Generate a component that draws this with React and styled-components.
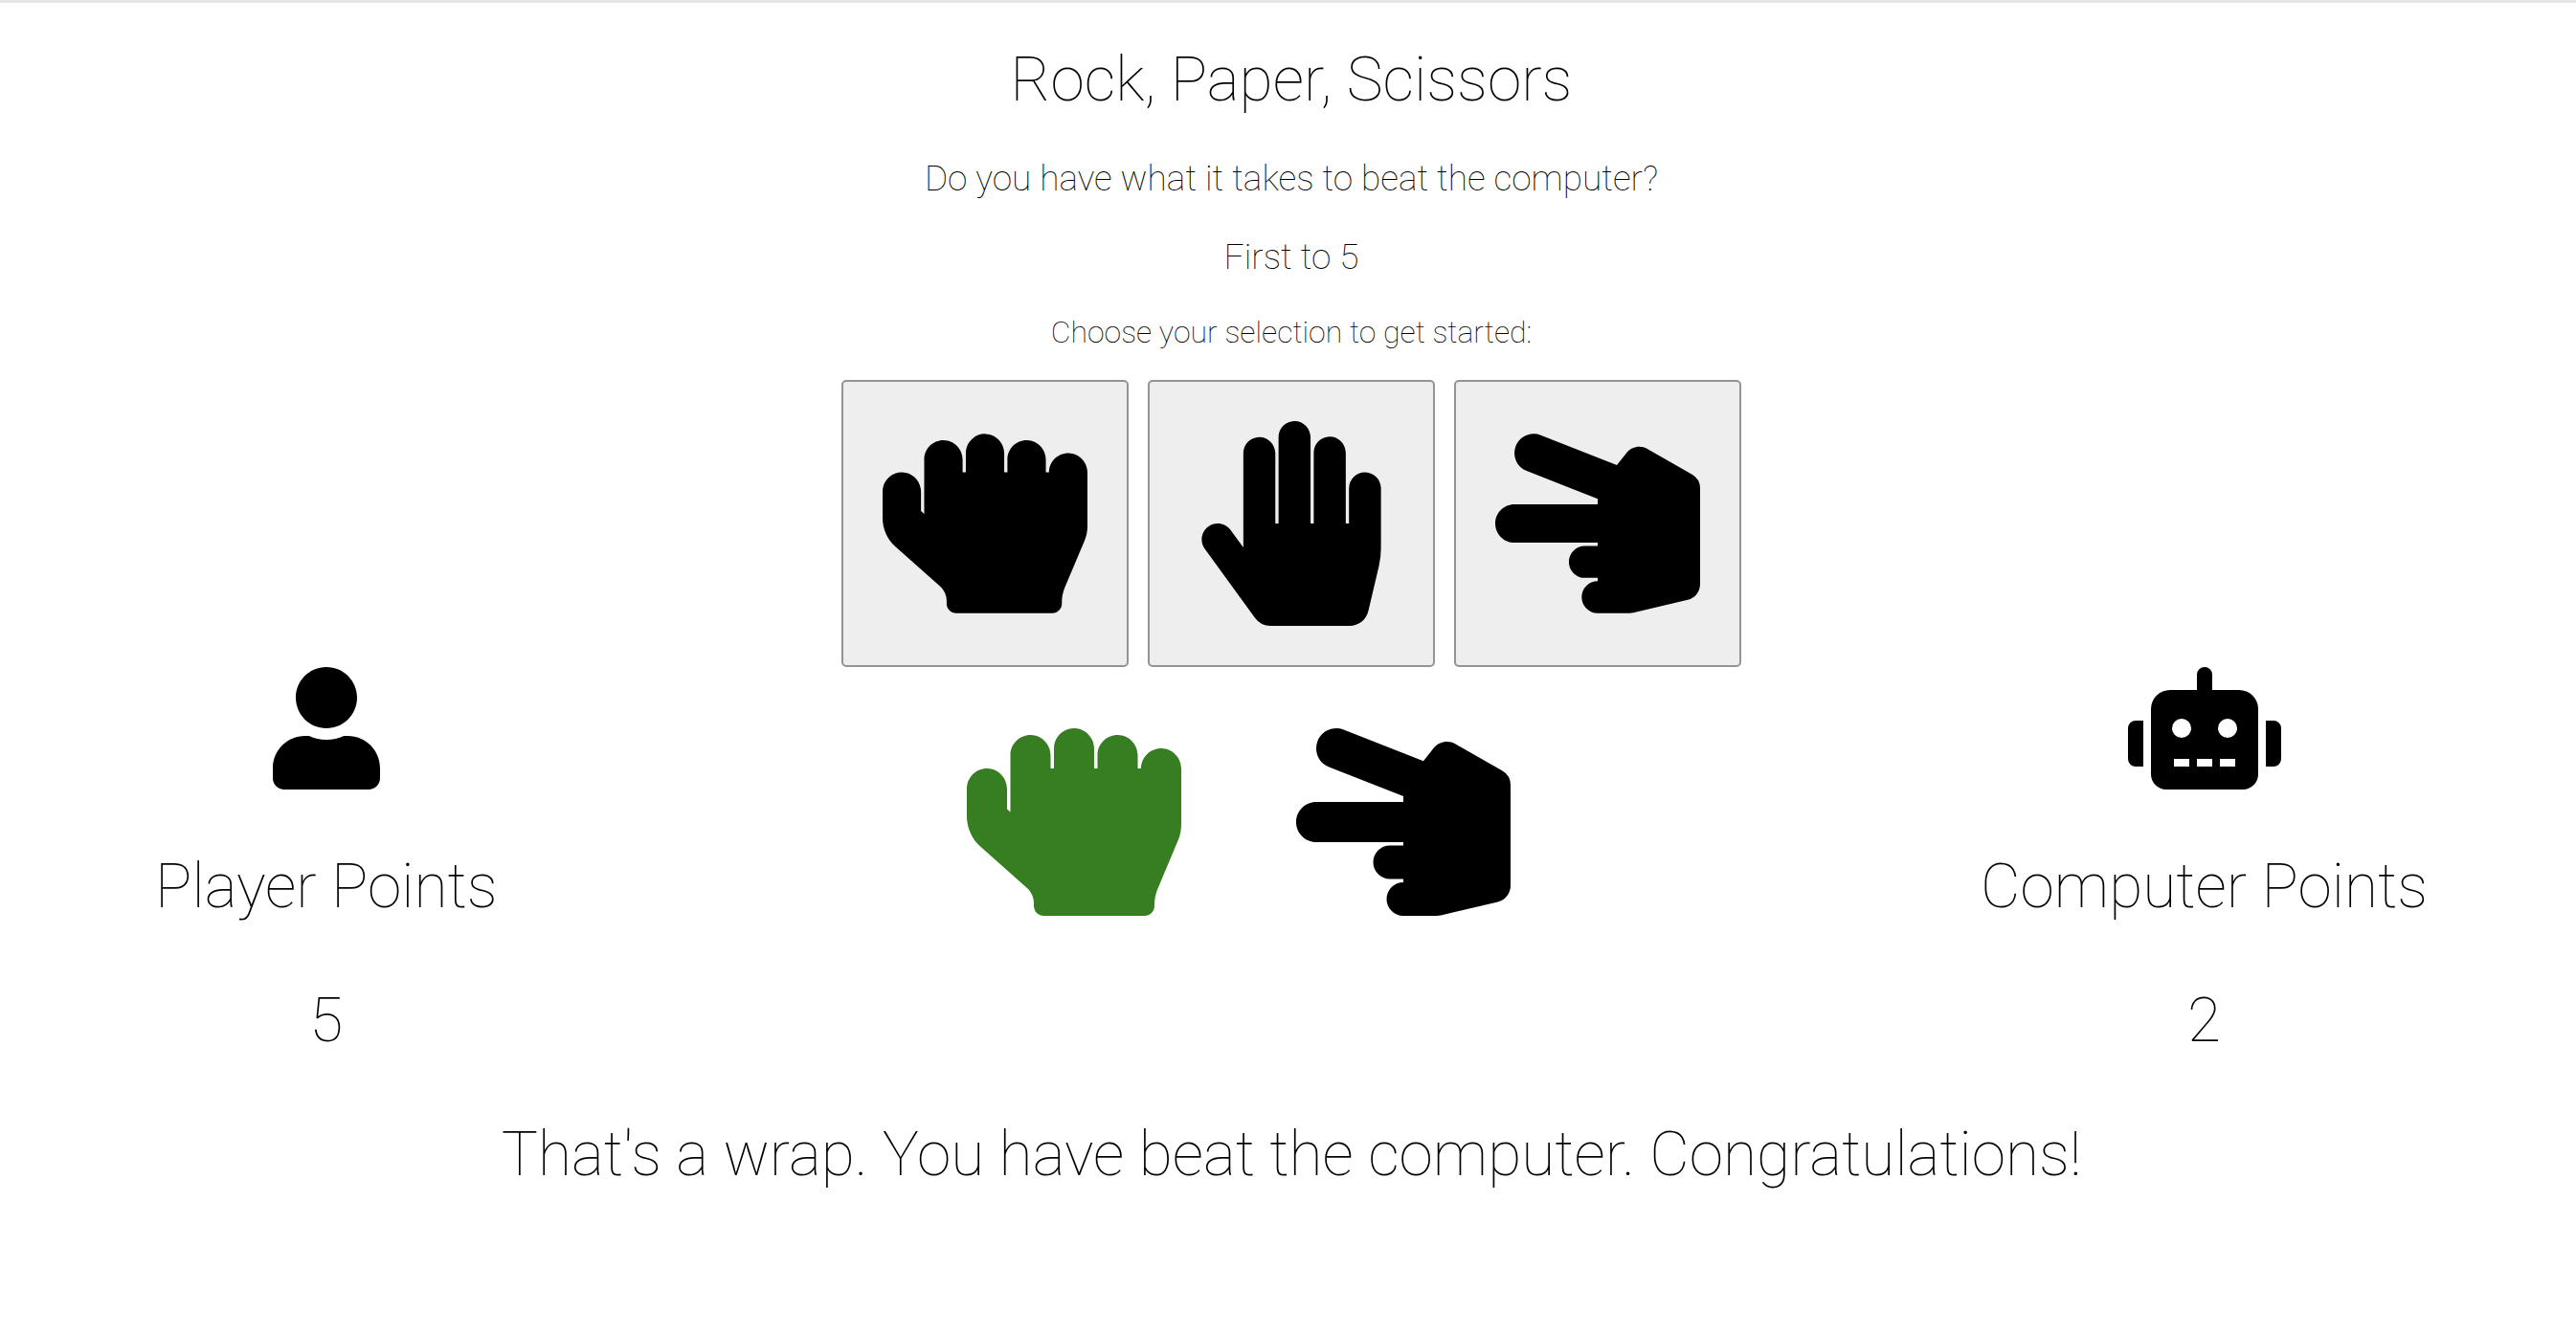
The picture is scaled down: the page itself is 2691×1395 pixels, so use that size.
import React, { useState } from "react";
import styled, { createGlobalStyle } from "styled-components";
import { FaHandRock, FaHandPaper, FaHandScissors, FaUser, FaRobot } from "react-icons/fa";

const Global = createGlobalStyle`
  * { box-sizing: border-box; }
  body {
    margin: 0;
    background: #fff;
    color: #000;
    font-family: Roboto, sans-serif;
    font-weight: 100;
  }
`;

const Page = styled.main`
  display: flex;
  flex-direction: column;
  padding: 43px 0 64px 7px;
  border-top: 3px solid #e6e6e6;
  text-align: center;
`;

const Intro = styled.header`
  display: flex;
  flex-direction: column;
  gap: 34px;
  padding-bottom: 30px;
`;

const Title = styled.h1`
  margin: 0 0 7px;
  font-size: 64px;
  line-height: 76px;
  font-weight: 100;
`;

const Lead = styled.p`
  margin: 0;
  font-size: 37px;
  line-height: 48px;
`;

const Hint = styled(Lead)`
  font-size: 32px;
  line-height: 40px;
`;

const Choices = styled.div`
  display: flex;
  justify-content: center;
  gap: 20px;
`;

const Choice = styled.button`
  display: flex;
  align-items: center;
  justify-content: center;
  width: 300px;
  height: 300px;
  padding: 0;
  border: 2px solid #949494;
  border-radius: 5px;
  background: #eee;
  color: #000;
  font-size: 214px;
  cursor: pointer;
`;

const Board = styled.section`
  display: flex;
  justify-content: space-between;
  padding: 0 155px;
  margin-bottom: 64px;
`;

const Score = styled.div`
  display: flex;
  flex-direction: column;
  align-items: center;
  gap: 64px;

  svg {
    width: 160px;
    height: 128px;
  }
`;

const Line = styled.p`
  margin: 0;
  font-size: 64px;
  line-height: 76px;
`;

const Round = styled.div`
  display: flex;
  align-items: flex-start;
  gap: 120px;
  padding-top: 50px;
`;

const Hand = styled.span`
  display: flex;
  font-size: 224px;
  color: ${(p) => (p.$won ? "#377e22" : "#000")};
`;

const HANDS = [
  { name: "Rock", Icon: FaHandRock },
  { name: "Paper", Icon: FaHandPaper },
  { name: "Scissors", Icon: FaHandScissors },
];

function PlayerScore({ icon: Icon, label, points }) {
  return (
    <Score>
      <Icon aria-hidden="true" />
      <Line>{label}</Line>
      <Line>{points}</Line>
    </Score>
  );
}

export default function App() {
  const [picked, setPicked] = useState(HANDS[0]);
  const Player = picked.Icon;

  return (
    <>
      <Global />
      <Page>
        <Intro>
          <Title>Rock, Paper, Scissors</Title>
          <Lead>Do you have what it takes to beat the computer?</Lead>
          <Lead>First to 5</Lead>
          <Hint>Choose your selection to get started:</Hint>
        </Intro>
        <Choices>
          {HANDS.map((hand) => (
            <Choice key={hand.name} type="button" aria-label={hand.name} onClick={() => setPicked(hand)}>
              <hand.Icon />
            </Choice>
          ))}
        </Choices>
        <Board>
          <PlayerScore icon={FaUser} label="Player Points" points={5} />
          <Round>
            <Hand $won><Player /></Hand>
            <Hand><FaHandScissors /></Hand>
          </Round>
          <PlayerScore icon={FaRobot} label="Computer Points" points={2} />
        </Board>
        <Line role="status">That's a wrap. You have beat the computer. Congratulations!</Line>
      </Page>
    </>
  );
}
